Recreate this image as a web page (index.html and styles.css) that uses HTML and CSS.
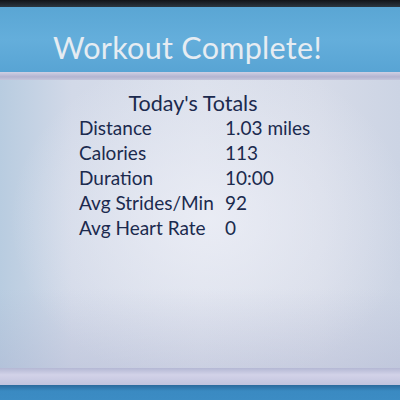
FILE: index.html
```html
<!DOCTYPE html>
<html>
<head>
<meta charset="utf-8">
<link rel="stylesheet" href="styles.css">
</head>
<body>
<div class="screen">
  <div class="bezel"></div>
  <header class="header">
    <h1 class="title">Workout Complete!</h1>
  </header>
  <div class="divider"></div>
  <main class="content">
    <h2 class="subtitle">Today's Totals</h2>
    <div class="stats">
      <div class="label">Distance</div><div class="value">1.03 miles</div>
      <div class="label">Calories</div><div class="value">113</div>
      <div class="label">Duration</div><div class="value">10:00</div>
      <div class="label">Avg Strides/Min</div><div class="value">92</div>
      <div class="label">Avg Heart Rate</div><div class="value">0</div>
    </div>
  </main>
  <div class="footer-bar"></div>
  <div class="footer"></div>
</div>
</body>
</html>
```

FILE: styles.css
```css
html, body {
  margin: 0;
  padding: 0;
}
.screen {
  width: 400px;
  height: 400px;
  display: flex;
  flex-direction: column;
  overflow: hidden;
  font-family: Lato, "Open Sans", sans-serif;
}
.bezel {
  height: 7px;
  background: linear-gradient(180deg, #121418, #2c3640);
}
.header {
  height: 65px;
  background: linear-gradient(180deg, #5aa6d4 0%, #64aedb 50%, #58a4d4 100%);
  display: flex;
  align-items: flex-end;
}
.title {
  margin: 0 0 8px 53px;
  font-weight: 400;
  font-size: 30.5px;
  line-height: 34px;
  color: #e6ecf2;
  letter-spacing: 0.3px;
}
.divider {
  height: 8px;
  background: linear-gradient(180deg, #cfd0e4 0%, #b4b4d0 60%, #c4c6dc 100%);
}
.content {
  flex: 1;
  background:
    radial-gradient(ellipse 200px 170px at 210px 140px, rgba(236,238,246,0.85), rgba(236,238,246,0) 100%),
    linear-gradient(90deg, #b8cce0 0%, #d2d9e8 18%, #dadfeb 50%, #d6dbe8 80%, #ccd4e4 100%);
  display: flex;
  flex-direction: column;
  align-items: center;
  position: relative;
}
.content::after {
  content: "";
  position: absolute;
  left: 0; right: 0; bottom: 0;
  height: 80px;
  background: linear-gradient(180deg, rgba(175,182,208,0) 0%, rgba(170,176,206,0.35) 100%);
}
.subtitle {
  margin: 10px 0 0 -14px;
  font-weight: 400;
  font-size: 21.5px;
  line-height: 26px;
  color: #1b2a4e;
}
.stats {
  display: grid;
  grid-template-columns: 146px auto;
  row-gap: 1px;
  align-self: flex-start;
  margin: 0 0 0 79px;
  color: #1b2a4e;
  font-size: 19px;
  line-height: 24px;
}
.footer-bar {
  height: 17px;
  background: linear-gradient(180deg, #b4b8d4 0%, #d2d2e8 40%, #c2c4de 100%);
}
.footer {
  height: 15px;
  background: linear-gradient(180deg, #2c6a9c 0%, #3a8ac2 40%, #3c8cc4 100%);
}
```
